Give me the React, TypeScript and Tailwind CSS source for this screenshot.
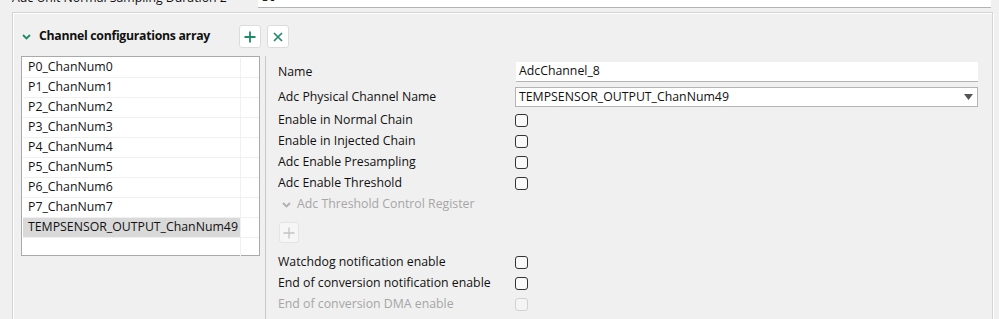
import React from "react";

const FONT = "font-['Open_Sans','Noto_Sans',sans-serif]";

const CHANNELS = [
  "P0_ChanNum0",
  "P1_ChanNum1",
  "P2_ChanNum2",
  "P3_ChanNum3",
  "P4_ChanNum4",
  "P5_ChanNum5",
  "P6_ChanNum6",
  "P7_ChanNum7",
  "TEMPSENSOR_OUTPUT_ChanNum49",
];

function Chevron({ className }: { className?: string }) {
  return (
    <svg width="9" height="6" viewBox="0 0 9 6" className={className}>
      <polyline points="1,1 4.5,4.5 8,1" fill="none" stroke="currentColor" strokeWidth="1.8" />
    </svg>
  );
}

function Checkbox({ disabled }: { disabled?: boolean }) {
  return (
    <span
      className={
        "block h-[13px] w-[13px] rounded-[3px] border " +
        (disabled ? "border-[#d2d2d2] bg-[#f4f4f4]" : "border-[#333] bg-[#f9f9f9]")
      }
    />
  );
}

function CheckRow({ label, disabled }: { label: string; disabled?: boolean }) {
  return (
    <div className="flex h-[21px] items-center">
      <span className={"w-[237px] " + (disabled ? "text-[#a6a6a6]" : "text-[#111]")}>{label}</span>
      <Checkbox disabled={disabled} />
    </div>
  );
}

export default function App() {
  return (
    <div className={`${FONT} relative h-[319px] w-[999px] overflow-hidden bg-[#f0f0f0] text-[12.3px] text-[#111]`}>
      {/* row above, clipped by the viewport */}
      <div className="-mt-[12px] flex h-[20px] items-center">
        <span className="w-[258px] pl-[12px]">Adc Unit Normal Sampling Duration 2</span>
        <div className="flex h-full w-[733px] items-center border-b border-[#b4b4b4] bg-white pl-[4px]">30</div>
      </div>

      {/* group box */}
      <div className="ml-[12px] mt-[4px] h-[330px] w-[981px] border border-[#d4d4d4] shadow-[inset_1px_1px_0_#fff,1px_1px_0_#fff]">
        <div className="flex items-center pl-[9px] pt-[12px]">
          <Chevron className="text-[#1f8a68]" />
          <span className="ml-[8px] w-[200px] font-bold tracking-[-0.3px]">Channel configurations array</span>
          <button className="flex h-[23px] w-[22px] items-center justify-center rounded-[3px] border border-[#dcdcdc] bg-white text-[#1f8a68]">
            <svg width="12" height="12" viewBox="0 0 12 12">
              <path d="M6 0.5V11.5M0.5 6H11.5" stroke="currentColor" strokeWidth="1.8" />
            </svg>
          </button>
          <button className="ml-[6px] flex h-[23px] w-[22px] items-center justify-center rounded-[3px] border border-[#dcdcdc] bg-white text-[#1f8a68]">
            <svg width="10" height="10" viewBox="0 0 10 10">
              <path d="M1 1L9 9M9 1L1 9" stroke="currentColor" strokeWidth="1.7" />
            </svg>
          </button>
        </div>

        <div className="mt-[8px] flex">
          {/* channel list */}
          <div className="ml-[8px] h-[200px] w-[239px] border border-[#a9a9a9] bg-white pt-[1px]">
            <div className="flex">
              <div className="w-[218px] pl-[1px]">
                {CHANNELS.map((c, i) => (
                  <div
                    key={c}
                    className={
                      "flex h-[20px] items-center border-b border-[#f0f0f0] pl-[5px] " +
                      (i === CHANNELS.length - 1 ? "bg-[#d9d9d9]" : "")
                    }
                  >
                    {c}
                  </div>
                ))}
                <div className="h-[18px]" />
              </div>
              <div className="flex-1 border-l border-[#f0f0f0]">
                {CHANNELS.map((c) => (
                  <div key={c} className="h-[20px] border-b border-[#f0f0f0]" />
                ))}
              </div>
            </div>
          </div>

          {/* divider */}
          <div className="ml-[5px] h-[280px] w-px bg-[#c8c8c8]" />

          {/* form */}
          <div className="ml-[12px] pt-[6px]">
            <div className="flex h-[20px] items-center">
              <span className="w-[238px]">Name</span>
              <div className="flex h-full w-[462px] items-center border-b border-[#b4b4b4] bg-white pl-[3px]">
                AdcChannel_8
              </div>
            </div>
            <div className="mt-[5px] flex h-[20px] items-center">
              <span className="w-[237px]">Adc Physical Channel Name</span>
              <div className="flex h-full w-[463px] items-center justify-between border border-[#b4b4b4] bg-white pl-[3px] pr-[4px]">
                <span>TEMPSENSOR_OUTPUT_ChanNum49</span>
                <svg width="9" height="6" viewBox="0 0 9 6">
                  <path d="M0 0H9L4.5 6Z" fill="#555" />
                </svg>
              </div>
            </div>
            <div className="mt-[3px]">
              <CheckRow label="Enable in Normal Chain" />
              <CheckRow label="Enable in Injected Chain" />
              <CheckRow label="Adc Enable Presampling" />
              <CheckRow label="Adc Enable Threshold" />
              <div className="flex h-[21px] items-center text-[#a6a6a6]">
                <Chevron className="ml-[4px] text-[#b0b0b0]" />
                <span className="ml-[6px]">Adc Threshold Control Register</span>
              </div>
            </div>
            <button className="ml-[1px] mt-[7px] flex h-[21px] w-[20px] items-center justify-center rounded-[3px] border border-[#e4e4e4] bg-[#f6f6f6] text-[#c4c4c4]">
              <svg width="12" height="12" viewBox="0 0 12 12">
                <path d="M6 0.5V11.5M0.5 6H11.5" stroke="currentColor" strokeWidth="1.3" />
              </svg>
            </button>
            <div className="mt-[9px]">
              <CheckRow label="Watchdog notification enable" />
              <CheckRow label="End of conversion notification enable" />
              <CheckRow label="End of conversion DMA enable" disabled />
            </div>
          </div>
        </div>
      </div>
    </div>
  );
}
